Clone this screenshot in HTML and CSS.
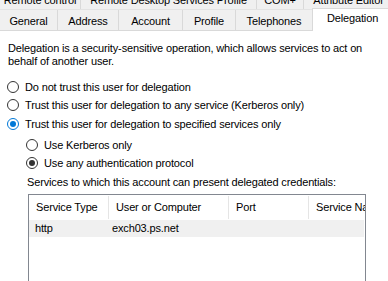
FILE: index.html
```html
<!DOCTYPE html>
<html>
<head>
<meta charset="utf-8">
<link rel="stylesheet" href="styles.css">
</head>
<body>
<div class="tabs">
  <div class="tabrow top">
    <div class="tab w-rc"><span>Remote control</span></div>
    <div class="tab w-rds"><span>Remote Desktop Services Profile</span></div>
    <div class="tab w-com"><span>COM+</span></div>
    <div class="tab w-attr"><span>Attribute Editor</span></div>
  </div>
  <div class="tabrow bottom">
    <div class="tab w-gen">General</div>
    <div class="tab w-addr">Address</div>
    <div class="tab w-acc">Account</div>
    <div class="tab w-prof">Profile</div>
    <div class="tab w-tel">Telephones</div>
    <div class="tab sel">Delegation</div>
  </div>
</div>
<div class="page">
  <p class="intro">Delegation is a security-sensitive operation, which allows services to act on behalf of another user.</p>
  <div class="opt r1"><span class="radio"></span>Do not trust this user for delegation</div>
  <div class="opt r2"><span class="radio"></span>Trust this user for delegation to any service (Kerberos only)</div>
  <div class="opt r3"><span class="radio on-blue"></span>Trust this user for delegation to specified services only</div>
  <div class="opt sub s1"><span class="radio"></span>Use Kerberos only</div>
  <div class="opt sub s2"><span class="radio on-dark"></span>Use any authentication protocol</div>
  <div class="label">Services to which this account can present delegated credentials:</div>
  <div class="list">
    <div class="lhead">
      <div class="c1">Service Type</div>
      <div class="c2">User or Computer</div>
      <div class="c3">Port</div>
      <div class="c4">Service Name</div>
    </div>
    <div class="lrow">
      <div class="c1">http</div>
      <div class="c2">exch03.ps.net</div>
      <div class="c3"></div>
      <div class="c4"></div>
    </div>
  </div>
</div>
</body>
</html>
```
FILE: styles.css
```css
* { box-sizing: border-box; }
html, body { margin: 0; padding: 0; background: #fff; }
body {
  width: 388px; height: 281px; overflow: hidden;
  font-family: "Liberation Sans", Arial, sans-serif;
  font-size: 11px; color: #000; letter-spacing: -0.15px;
}
.tabs { background: #f0f0f0; }
.tabrow { display: flex; white-space: nowrap; }
.tabrow.top { height: 10px; border-bottom: 1px solid #e3e3e3; overflow: hidden; }
.tabrow.top .tab { height: 9px; border-right: 1px solid #d9d9d9; overflow: hidden; }
.tabrow.top .tab span { display: block; line-height: 13px; margin-top: -6px; text-align: center; }
.tabrow.bottom { height: 21px; border-bottom: 1px solid #d9d9d9; }
.tabrow.bottom .tab { height: 20px; line-height: 22px; text-align: center; border-right: 1px solid #d9d9d9; flex: none; }
.w-rc { width: 81px; flex: none; }
.w-rds { width: 176px; flex: none; }
.w-com { width: 47px; flex: none; }
.w-attr { width: 90px; flex: none; }
.w-gen { width: 58px; }
.w-addr { width: 61px; }
.w-acc { width: 64px; }
.w-prof { width: 53px; }
.w-tel { width: 77px; }
.tabrow.bottom .tab.sel {
  width: 80px; height: 23px; margin-top: -2px; margin-left: -1px;
  background: #fff; border: 1px solid #d9d9d9; border-bottom: none;
  line-height: 18px; position: relative; z-index: 1; text-align: left;
  padding-left: 14px;
}
.page { padding: 0 0 0 8px; }
.intro { margin: 11px 0 0 0; line-height: 13px; width: 370px; }
.opt { height: 18px; display: flex; align-items: center; white-space: nowrap; }
.r1 { margin-top: 10px; }
.r2 { margin-top: 0; }
.r3 { margin-top: 1px; }
.s1 { margin-top: 3px; }
.s2 { margin-top: 0; }
.sub { padding-left: 19px; }
.radio {
  width: 12px; height: 12px; border-radius: 50%;
  border: 1px solid #333; background: #fff;
  margin-right: 6px; flex: none; position: relative; margin-left: -1px;
}
.on-blue { border-color: #0078d7; }
.on-blue::after, .on-dark::after {
  content: ""; position: absolute; left: 2px; top: 2px;
  width: 6px; height: 6px; border-radius: 50%; background: #0078d7;
}
.on-dark::after { background: #333; }
.label { margin-top: 4px; line-height: 13px; padding-left: 19px; white-space: nowrap; }
.list {
  margin: 5px 0 0 20px; width: 338px; height: 87px;
  border: 1px solid #828790; border-bottom: none; overflow: hidden; padding-right: 1px;
}
.lhead, .lrow { display: flex; white-space: nowrap; }
.lhead { height: 25px; align-items: center; }
.lhead > div { height: 23px; line-height: 23px; border-right: 1px solid #e5e5e5; padding-left: 7px; overflow: hidden; flex: none; }
.lrow { height: 17px; background: #f0f0f0; line-height: 17px; }
.lrow > div { flex: none; overflow: hidden; }
.c1 { width: 80px; }
.c2 { width: 120px; }
.c3 { width: 80px; }
.c4 { width: 80px; border-right: none !important; }
.lrow .c1 { padding-left: 6px; }
.lrow .c2 { padding-left: 3px; }
```
